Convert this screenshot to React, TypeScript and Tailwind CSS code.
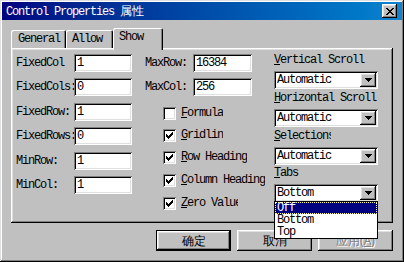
import React from "react";

const F = "font-mono text-[12px] tracking-[-1.2px] leading-[13px] text-black";
const CJK = "font-sans text-[12px] leading-[14px]";
const raised = "shadow-[inset_-1px_-1px_#000,inset_1px_1px_#fff,inset_-2px_-2px_#808080,inset_2px_2px_#dfdfdf]";
const sunken = "shadow-[inset_1px_1px_#808080,inset_-1px_-1px_#fff,inset_2px_2px_#000,inset_-2px_-2px_#dfdfdf]";

function Field({ value, w }: { value: string; w: string }) {
  return (
    <div className={`h-[18px] ${w} shrink-0 bg-white ${sunken} pl-[3px] flex items-center ${F}`}>{value}</div>
  );
}

function Check() {
  return (
    <svg width="7" height="7" viewBox="0 0 7 7" shapeRendering="crispEdges">
      <path
        fill="#000"
        d="M6 0h1v1h-1z M5 1h2v1h-2z M0 2h1v1h-1z M4 2h3v1h-3z M0 3h2v1h-2z M3 3h3v1h-3z M0 4h5v1h-5z M1 5h3v1h-3z M2 6h1v1h-1z"
      />
    </svg>
  );
}

function Arrow() {
  return (
    <svg width="7" height="4" viewBox="0 0 7 4" shapeRendering="crispEdges">
      <path fill="#000" d="M0 0h7v1h-7z M1 1h5v1h-5z M2 2h3v1h-3z M3 3h1v1h-1z" />
    </svg>
  );
}

function CheckRow({ u, rest, checked, mt, clip }: { u: string; rest: string; checked: boolean; mt: string; clip?: string }) {
  return (
    <div className={`flex items-center h-[13px] ${mt}`}>
      <div className={`w-[13px] h-[13px] bg-white ${sunken} flex items-center justify-center shrink-0`}>
        {checked ? <Check /> : null}
      </div>
      <span className={`ml-[5px] shrink-0 whitespace-nowrap overflow-hidden ${clip ?? ""} ${F}`}>
        <span className="underline">{u}</span>
        {rest}
      </span>
    </div>
  );
}

function Select({ value, children }: { value: string; children?: React.ReactNode }) {
  return (
    <div className={`relative mt-[4px] h-[18px] w-[104px] bg-white ${sunken} flex items-center pl-[3px] pr-[2px]`}>
      <span className={`flex-1 ${F}`}>{value}</span>
      <div className={`w-[16px] h-[14px] bg-[#c0c0c0] ${raised} flex items-center justify-center`}>
        <Arrow />
      </div>
      {children}
    </div>
  );
}

function Group({ u, rest, mt, value, clip, children }: { u: string; rest: string; mt: string; value: string; clip?: string; children?: React.ReactNode }) {
  return (
    <div className={`flex flex-col ${mt}`}>
      <div className={`h-[13px] whitespace-nowrap overflow-hidden ${clip ?? ""} ${F}`}>
        <span className="underline">{u}</span>
        {rest}
      </div>
      <Select value={value}>{children}</Select>
    </div>
  );
}

export default function App() {
  const leftRows: [string, string, string][] = [
    ["FixedCol", "1", "mt-0"],
    ["FixedCols:", "0", "mt-[6px]"],
    ["FixedRow:", "1", "mt-[7px]"],
    ["FixedRows:", "0", "mt-[6px]"],
    ["MinRow:", "1", "mt-[7px]"],
    ["MinCol:", "1", "mt-[6px]"],
  ];

  return (
    <div className={`relative w-[404px] h-[262px] bg-[#c0c0c0] p-[2px] flex flex-col shadow-[inset_-1px_-1px_#000,inset_1px_1px_#dfdfdf,inset_-2px_-2px_#808080,inset_2px_2px_#fff]`}>
      {/* Title bar */}
      <div className="h-[18px] flex items-center bg-gradient-to-r from-[#000080] to-[#1084d0] pl-[4px]">
        <span className={`flex-1 ${F} text-white`}>
          Control Properties <span className="font-sans tracking-normal">属性</span>
        </span>
        <div className={`w-[15px] h-[14px] mr-[5px] bg-[#c0c0c0] ${raised} flex items-center justify-center`}>
          <svg width="8" height="7" viewBox="0 0 8 7" shapeRendering="crispEdges">
            <path
              fill="#000"
              d="M0 0h2v1h-2z M6 0h2v1h-2z M1 1h2v1h-2z M5 1h2v1h-2z M2 2h4v1h-4z M3 3h2v1h-2z M2 4h4v1h-4z M1 5h2v1h-2z M5 5h2v1h-2z M0 6h2v1h-2z M6 6h2v1h-2z"
            />
          </svg>
        </div>
      </div>

      {/* Tabs */}
      <div className="mt-[8px] ml-[9px] h-[20px] flex items-end">
        <div className={`h-[18px] w-[55px] pl-[7px] pt-[3px] rounded-tl-[2px] rounded-tr-[2px] shadow-[inset_1px_1px_#fff,inset_-1px_0_#000,inset_-2px_0_#808080] ${F}`}>
          General
        </div>
        <div className={`h-[18px] w-[47px] pl-[6px] pt-[3px] rounded-tl-[2px] rounded-tr-[2px] shadow-[inset_1px_1px_#fff,inset_-1px_0_#000,inset_-2px_0_#808080] ${F}`}>
          Allow
        </div>
        <div className={`relative z-10 -mb-[2px] h-[22px] w-[50px] pl-[6px] pt-[3px] bg-[#c0c0c0] rounded-tl-[2px] rounded-tr-[2px] shadow-[inset_1px_1px_#fff,inset_-1px_0_#000,inset_-2px_0_#808080] ${F}`}>
          Show
        </div>
      </div>

      {/* Panel */}
      <div className={`relative mx-[9px] h-[175px] pt-[6px] pl-[5px] flex ${raised}`}>
        {/* Left column */}
        <div className="flex flex-col w-[116px] shrink-0">
          {leftRows.map(([l, v, mt]) => (
            <div key={l} className={`flex items-center h-[18px] ${mt}`}>
              <div className={`w-[58px] shrink-0 overflow-hidden whitespace-nowrap ${F}`}>{l}</div>
              <Field value={v} w="w-[58px]" />
            </div>
          ))}
        </div>

        {/* Middle column */}
        <div className="flex flex-col ml-[13px] w-[107px] shrink-0">
          <div className="flex items-center h-[18px]">
            <div className={`w-[48px] shrink-0 whitespace-nowrap ${F}`}>MaxRow:</div>
            <Field value="16384" w="w-[59px]" />
          </div>
          <div className="flex items-center h-[18px] mt-[6px]">
            <div className={`w-[48px] shrink-0 whitespace-nowrap ${F}`}>MaxCol:</div>
            <Field value="256" w="w-[59px]" />
          </div>
          <div className="pl-[18px] flex flex-col">
            <CheckRow u="F" rest="ormula" checked={false} mt="mt-[11px]" />
            <CheckRow u="G" rest="ridlines" checked mt="mt-[9px]" clip="w-[42px]" />
            <CheckRow u="R" rest="ow Heading" checked mt="mt-[9px]" />
            <CheckRow u="C" rest="olumn Heading" checked mt="mt-[10px]" />
            <CheckRow u="Z" rest="ero Value" checked mt="mt-[10px]" clip="w-[57px]" />
          </div>
        </div>

        {/* Right column */}
        <div className="flex flex-col ml-[22px] w-[104px] shrink-0">
          <Group u="V" rest="ertical Scroll" mt="mt-0" value="Automatic" />
          <Group u="H" rest="orizontal Scroll" mt="mt-[3px]" value="Automatic" />
          <Group u="S" rest="elections" mt="mt-[3px]" value="Automatic" clip="w-[57px]" />
          <Group u="T" rest="abs" mt="mt-[2px]" value="Bottom">
            <div className="absolute left-0 top-[17px] w-[104px] bg-white border border-black z-20 flex flex-col">
              <div className={`h-[12px] bg-[#000080] border border-dotted border-[#ffff80] pl-[1px] flex items-center ${F} text-white`}>
                Off
              </div>
              <div className={`h-[12px] pl-[2px] flex items-center ${F}`}>Bottom</div>
              <div className={`h-[12px] pl-[2px] flex items-center ${F}`}>Top</div>
            </div>
          </Group>
        </div>
      </div>

      {/* Buttons */}
      <div className="mt-[7px] mr-[9px] flex justify-end gap-[6px]">
        <div className={`w-[75px] h-[21px] border border-black flex items-center justify-center ${raised} ${CJK} text-black`}>
          确定
        </div>
        <div className={`w-[75px] h-[21px] flex items-center justify-center ${raised} ${CJK} text-black`}>
          取消
        </div>
        <div className={`w-[75px] h-[21px] flex items-center justify-center ${raised} ${CJK} text-[#808080] [text-shadow:1px_1px_#fff]`}>
          应用(<span className="underline">A</span>)
        </div>
      </div>
    </div>
  );
}
